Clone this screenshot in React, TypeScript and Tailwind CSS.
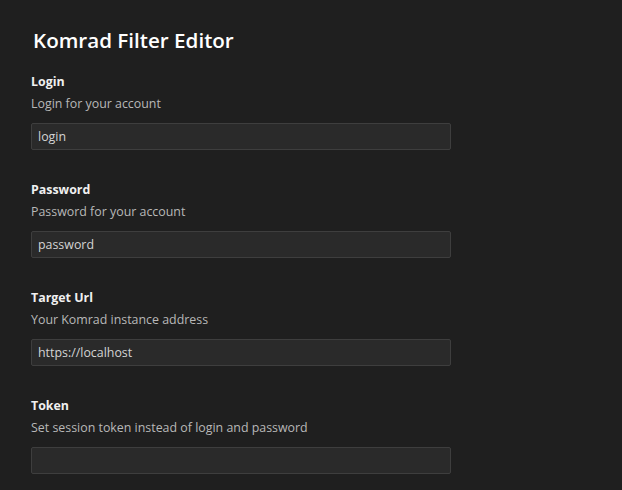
const fields = [
  { label: "Login", desc: "Login for your account", value: "login" },
  { label: "Password", desc: "Password for your account", value: "password" },
  { label: "Target Url", desc: "Your Komrad instance address", value: "https://localhost" },
  { label: "Token", desc: "Set session token instead of login and password", value: "" },
];

export default function App() {
  return (
    <div
      className="min-h-screen bg-[#1f1f1f] pl-[31px] pt-[25px] text-[#cccccc]"
      style={{ fontFamily: '"Open Sans", "Noto Sans", sans-serif' }}
    >
      <h1 className="mb-[18px] pl-[2px] text-[20.6px] font-semibold leading-[30px] text-white">
        Komrad Filter Editor
      </h1>
      <div className="flex flex-col gap-[31px]">
        {fields.map((f) => (
          <div key={f.label} className="flex flex-col">
            <label className="text-[12.4px] font-bold leading-[18px] text-[#f0f0f0]">{f.label}</label>
            <p className="mt-[4px] text-[12.4px] leading-[18px] text-[#b8b8b8]">{f.desc}</p>
            <input
              readOnly
              value={f.value}
              className="mt-[10px] h-[27px] w-[420px] rounded-[2px] border border-[#3e3e3e] bg-[#2a2a2a] px-[6px] text-[12.4px] text-[#d4d4d4] outline-none"
            />
          </div>
        ))}
      </div>
    </div>
  );
}
